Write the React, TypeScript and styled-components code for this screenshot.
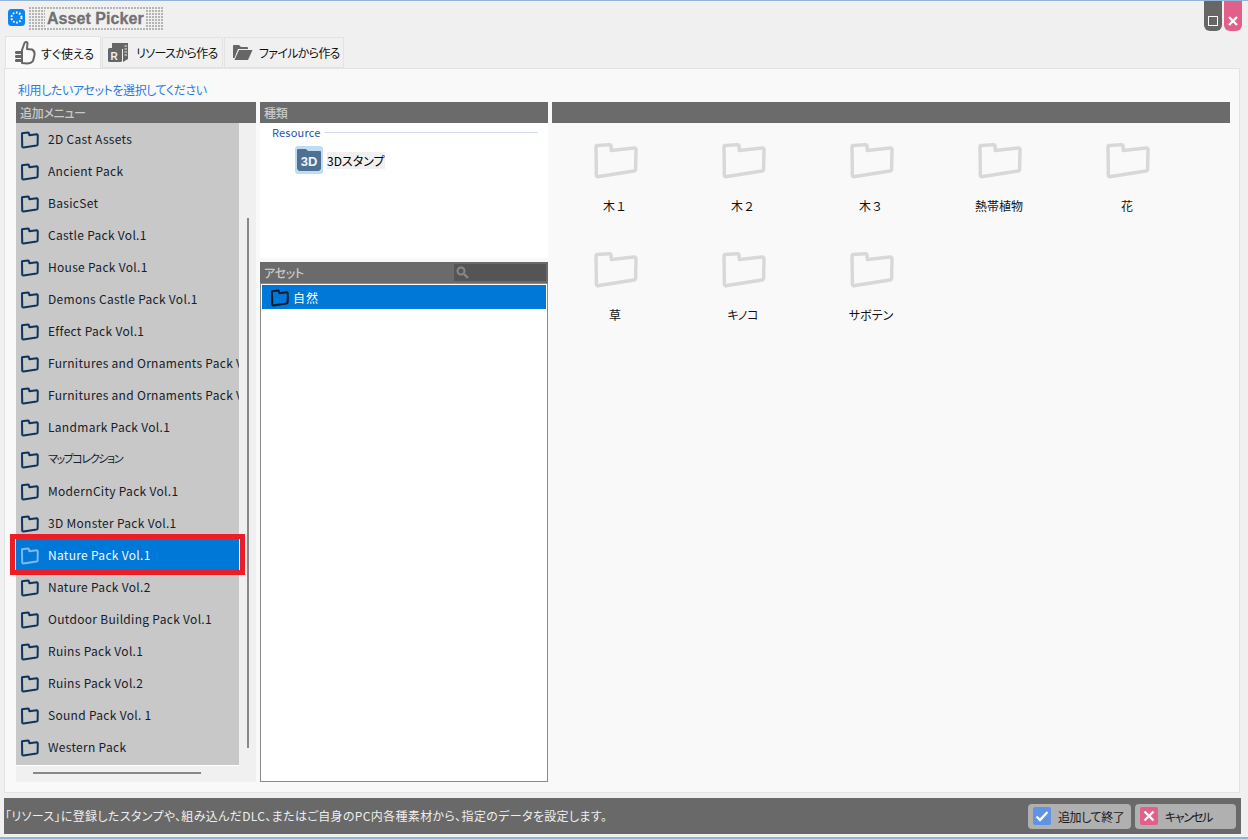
import React from "react";
import styled, { createGlobalStyle } from "styled-components";

const Global = createGlobalStyle`
  html, body { margin: 0; padding: 0; background: #f0f0f0; }
  body { font-family: "Noto Sans CJK JP", "Noto Sans", sans-serif; font-size: 12px; font-feature-settings: "palt"; color: #111; }
  * { box-sizing: border-box; }
`;

const Window = styled.div`
  width: 1248px; height: 839px; display: flex; flex-direction: column;
  background: #f0f0f0; border-top: 1px solid #94b4d6; border-bottom: 2px solid #94b4d6; overflow: hidden;
`;
const TitleBar = styled.div`
  height: 34px; flex: none; display: flex; align-items: flex-start; padding-left: 8px;
`;
const AppIcon = styled.svg`
  width: 17px; height: 17px; margin-top: 8px; flex: none;
`;
const TitleBlock = styled.div`
  margin: 6px 0 0 4px; width: 135px; height: 24px; padding: 3px 0 0 16px;
  background-image: radial-gradient(circle at 1px 1px, #b4b4b4 1px, transparent 1.1px);
  background-size: 3px 3px;
`;
const TitleText = styled.span`
  display: inline-block; height: 18px; padding: 0 2px; background: #f0f0f0;
  font-family: "Liberation Sans", sans-serif; font-weight: 700; font-size: 16px; line-height: 18px;
  letter-spacing: 0.05px; color: #717171; -webkit-text-stroke: 0.3px #717171; font-feature-settings: normal;
`;
const WinButtons = styled.div`
  margin-left: auto; margin-right: 6px; display: flex; gap: 2px; margin-top: -1px;
`;
const WinButton = styled.div<{ $bg: string }>`
  width: 18px; height: 31px; background: ${(p) => p.$bg}; border-radius: 0 0 6px 6px;
  display: flex; align-items: flex-end; justify-content: center; padding-bottom: 5px;
`;
const TabRow = styled.div`
  height: 33px; flex: none; display: flex; align-items: flex-end; padding-left: 5px; gap: 1px;
`;
const Tab = styled.div<{ $active?: boolean; $w: number; $pad: number; $gap: number; $ls: number }>`
  width: ${(p) => p.$w}px; height: ${(p) => (p.$active ? 33 : 31)}px; display: flex; align-items: center; gap: ${(p) => p.$gap}px;
  padding-left: ${(p) => p.$pad}px; white-space: nowrap;
  background: ${(p) => (p.$active ? "#f9f9f9" : "#f0f0f0")};
  border: 1px solid #e3e3e3; border-bottom: ${(p) => (p.$active ? "none" : "1px solid #e3e3e3")};
  color: #111; font-size: 12px; letter-spacing: ${(p) => p.$ls}px; margin-bottom: ${(p) => (p.$active ? -1 : 0)}px;
`;
const TabBody = styled.div`
  width: 1236px; height: 725px; margin-left: 4px; flex: none; background: #f9f9f9; border: 1px solid #e3e3e3;
  padding: 11px 9px 10px 11px; display: flex; flex-direction: column;
`;
const Hint = styled.div`
  height: 22px; padding-left: 2px; color: #2a7be4; font-size: 12px; line-height: 19px; letter-spacing: -0.4px;
`;
const Columns = styled.div`
  display: flex; gap: 4px; height: 680px;
`;
const SectionHeader = styled.div`
  height: 21px; flex: none; background: #6b6b6b; color: #c9c9c9; font-size: 12px; font-weight: 500; line-height: 20px; padding-left: 4px;
  letter-spacing: -0.3px; display: flex; justify-content: space-between; align-items: center;
`;
const LeftCol = styled.div`
  width: 240px; flex: none; display: flex; flex-direction: column; background: #f0f0f0;
`;
const ListArea = styled.div`
  display: flex; height: 642px; flex: none;
`;
const PackList = styled.div`
  width: 223px; background: #c8c8c8; flex: none; border-bottom: 1px solid #fff; height: 643px;
`;
const PackRow = styled.div<{ $selected?: boolean }>`
  height: 32px; display: flex; align-items: center; gap: 9px; padding-left: 4px; position: relative; white-space: nowrap;
  background: ${(p) => (p.$selected ? "#0078d7" : "transparent")};
  color: ${(p) => (p.$selected ? "#f2f8ff" : "#14202c")};
`;
const PackLabel = styled.span<{ $kana?: boolean }>`
  display: block; width: 191px; overflow: hidden; margin-top: -2px;
  font-size: ${(p) => (p.$kana ? 11 : 12)}px;
  letter-spacing: ${(p) => (p.$kana ? -1.4 : 0.3)}px;
`;
const RedBox = styled.div`
  position: absolute; left: -6px; top: -5px; width: 235px; height: 41px; border: 5px solid #ee1c25; pointer-events: none;
`;
const VTrack = styled.div`
  flex: 1; position: relative;
`;
const VThumb = styled.div`
  position: absolute; left: 8px; top: 95px; width: 2px; height: 530px; background: #888;
`;
const HTrack = styled.div`
  height: 17px; flex: none; padding: 7px 0 0 17px;
`;
const HThumb = styled.div`
  width: 168px; height: 2px; background: #888;
`;
const MidCol = styled.div`
  width: 288px; flex: none; display: flex; flex-direction: column;
`;
const KindPanel = styled.div`
  height: 135px; flex: none; background: #fff; padding: 1px 10px 0 12px;
`;
const GroupHead = styled.div`
  display: flex; align-items: center; gap: 4px; color: #1d52ad; font-size: 11px; height: 16px; letter-spacing: 0.2px;
`;
const GroupLine = styled.div`
  flex: 1; height: 1px; background: #d3dcf0;
`;
const KindRow = styled.div`
  display: flex; align-items: center; gap: 4px; margin: 6px 0 0 23px;
`;
const KindName = styled.span`
  background: #f0f0f0; color: #000; font-size: 12px; line-height: 17px; height: 17px;
`;
const AssetHeader = styled(SectionHeader)`
  margin-top: 4px; padding-right: 2px;
`;
const SearchBox = styled.div`
  width: 92px; height: 17px; background: #555; display: flex; align-items: center; padding-left: 2px;
`;
const AssetList = styled.div`
  flex: 1; background: #fff; border: 1px solid #8a8a8a; padding: 1px;
`;
const AssetRow = styled.div`
  height: 24px; background: #0078d7; color: #fff; display: flex; align-items: center; gap: 4px; padding-left: 8px; font-size: 12px; letter-spacing: 1px;
`;
const RightCol = styled.div`
  flex: 1; display: flex; flex-direction: column;
`;
const FolderGrid = styled.div`
  display: grid; grid-template-columns: repeat(5, 128px); grid-auto-rows: 109px; padding-top: 20px; margin-left: -1px;
`;
const FolderCell = styled.div`
  display: flex; flex-direction: column; align-items: center; color: #111; font-size: 12px;
`;
const FolderName = styled.div<{ $kana: boolean }>`
  margin-top: 17px; line-height: 20px; height: 20px;
  font-feature-settings: ${(p) => (p.$kana ? '"palt"' : "normal")};
`;
const Footer = styled.div`
  width: 1237px; height: 36px; margin: 5px 0 0 4px; flex: none; background: #696969; color: #eee; font-size: 12px;
  display: flex; align-items: center; padding: 0 5px 0 1px;
`;
const FooterText = styled.div`
  flex: 1; letter-spacing: 0.35px; margin-top: -2px;
`;
const FootButton = styled.div<{ $w: number; $ls: number; $gap: number }>`
  width: ${(p) => p.$w}px; height: 25px; background: #b0b0b0; border-radius: 4px; display: flex; align-items: center;
  padding-left: 5px; gap: ${(p) => p.$gap}px; color: #1a1a1a; margin-left: 4px; font-size: 12px; letter-spacing: ${(p) => p.$ls}px;
`;
const Badge = styled.div<{ $bg: string }>`
  width: 18px; height: 18px; border-radius: 2px; background: ${(p) => p.$bg}; display: flex; align-items: center; justify-content: center; flex: none;
`;

const Folder = ({ color = "#0d3560" }: { color?: string }) => (
  <svg width="19" height="19" viewBox="0 0 19 19" fill="none" style={{ flex: "none", marginTop: 1 }}>
    <path d="M2 3.2 L8 2.5 Q9.2 2.6 9.3 5.2 L16.6 4.2 Q17.8 4.2 17.8 5.4 L17.6 14.4 Q17.6 15.2 16.6 15.4 L3.4 17.4 Q2.2 17.4 2.2 16.2 Z"
      stroke={color} strokeWidth="2" strokeLinejoin="round" />
  </svg>
);

const ThumbIcon = () => (
  <svg width="22" height="26" viewBox="0 0 22 26" fill="none" style={{ flex: "none" }}>
    <path d="M8 10 L10.5 3 Q12 1 13.5 3 L13 9 L18 9.5 Q21 11 20.5 15 L19 21 Q17 23.5 13 23.5 L8 23 Z" stroke="#666" strokeWidth="2" strokeLinejoin="round" />
    <rect x="1" y="11" width="7" height="3" rx="1.2" fill="#666" />
    <rect x="1" y="15" width="7" height="3" rx="1.2" fill="#666" />
    <rect x="1" y="19" width="7" height="3" rx="1.2" fill="#666" />
  </svg>
);
const ResIcon = () => (
  <svg width="22" height="21" viewBox="0 0 22 21" style={{ flex: "none" }}>
    <path d="M5 1 H21 V17 L16 20 V1 H5Z" fill="#666" />
    <rect x="5" y="1" width="12" height="6" fill="#666" />
    <rect x="1" y="6" width="14" height="14" rx="1.5" fill="#666" />
    <text x="3.5" y="18" fontFamily="Liberation Sans" fontWeight="700" fontSize="10" fill="#f0f0f0">R</text>
    <path d="M17.5 4 H20 M17.5 7 H20 M17.5 10 H20 M17.5 13 H20" stroke="#f0f0f0" strokeWidth="1" />
  </svg>
);
const OpenIcon = () => (
  <svg width="21" height="17" viewBox="0 0 21 17" style={{ flex: "none" }}>
    <path d="M1 2 Q1 1 2 1 H7 L9 3 H15 Q16 3 16 4 V5 H6 L2.5 14 H1Z" fill="#666" />
    <path d="M7 6 H20.5 L16 16 H2.5 Z" fill="#666" />
  </svg>
);
const Stamp3D = () => (
  <svg width="28" height="28" viewBox="0 0 28 28" style={{ flex: "none" }}>
    <rect width="28" height="28" rx="3" fill="#bedcf5" />
    <path d="M2 4 Q2 3 3 3 H11 L13 5 H25 Q26 5 26 6 V23 L24 25 H4 L2 23 Z" fill="#4f7091" />
    <text x="14" y="20" textAnchor="middle" fontFamily="Liberation Sans" fontWeight="700" fontSize="13" fill="#eef4fa">3D</text>
  </svg>
);

const packs = [
  "2D Cast Assets", "Ancient Pack", "BasicSet", "Castle Pack Vol.1", "House Pack Vol.1", "Demons Castle Pack Vol.1",
  "Effect Pack Vol.1", "Furnitures and Ornaments Pack Vol.1", "Furnitures and Ornaments Pack Vol.2", "Landmark Pack Vol.1",
  "マップコレクション", "ModernCity Pack Vol.1", "3D Monster Pack Vol.1", "Nature Pack Vol.1", "Nature Pack Vol.2",
  "Outdoor Building Pack Vol.1", "Ruins Pack Vol.1", "Ruins Pack Vol.2", "Sound Pack Vol. 1", "Western Pack",
];
const folders = ["木１", "木２", "木３", "熱帯植物", "花", "草", "キノコ", "サボテン"];
const hasKana = (s: string) => /[ァ-ヶ]/.test(s);

export default function App() {
  return (
    <Window>
      <Global />
      <TitleBar>
        <AppIcon viewBox="0 0 17 17">
          <rect width="17" height="17" rx="3.5" fill="#0d84ee" />
          <circle cx="8.5" cy="8.5" r="5" fill="none" stroke="#fff" strokeWidth="2" strokeDasharray="1.6 1.6" />
        </AppIcon>
        <TitleBlock><TitleText>Asset Picker</TitleText></TitleBlock>
        <WinButtons>
          <WinButton $bg="#666">
            <svg width="10" height="10" viewBox="0 0 10 10"><rect x=".5" y=".5" width="9" height="9" fill="none" stroke="#fff" /></svg>
          </WinButton>
          <WinButton $bg="#e0608a">
            <svg width="10" height="10" viewBox="0 0 10 10"><path d="M1 1 L9 9 M9 1 L1 9" stroke="#fff" strokeWidth="2.4" /></svg>
          </WinButton>
        </WinButtons>
      </TitleBar>
      <TabRow>
        <Tab $active $w={96} $pad={8} $gap={5} $ls={0}><ThumbIcon />すぐ使える</Tab>
        <Tab $w={121} $pad={4} $gap={7} $ls={-0.6}><ResIcon />リソースから作る</Tab>
        <Tab $w={120} $pad={7} $gap={6} $ls={-0.7}><OpenIcon />ファイルから作る</Tab>
      </TabRow>
      <TabBody>
        <Hint>利用したいアセットを選択してください</Hint>
        <Columns>
          <LeftCol>
            <SectionHeader>追加メニュー</SectionHeader>
            <ListArea>
              <PackList>
                {packs.map((name) => {
                  const selected = name === "Nature Pack Vol.1";
                  return (
                    <PackRow key={name} $selected={selected}>
                      <Folder color={selected ? "#7db9ee" : "#0d3560"} />
                      <PackLabel $kana={hasKana(name)}>{name}</PackLabel>
                      {selected && <RedBox />}
                    </PackRow>
                  );
                })}
              </PackList>
              <VTrack><VThumb /></VTrack>
            </ListArea>
            <HTrack><HThumb /></HTrack>
          </LeftCol>
          <MidCol>
            <SectionHeader>種類</SectionHeader>
            <KindPanel>
              <GroupHead>Resource<GroupLine /></GroupHead>
              <KindRow><Stamp3D /><KindName>3Dスタンプ</KindName></KindRow>
            </KindPanel>
            <AssetHeader>
              アセット
              <SearchBox>
                <svg width="13" height="13" viewBox="0 0 13 13" fill="none">
                  <circle cx="5" cy="5" r="3.5" stroke="#888" strokeWidth="2" />
                  <path d="M8 8 L12 12" stroke="#888" strokeWidth="2.4" />
                </svg>
              </SearchBox>
            </AssetHeader>
            <AssetList>
              <AssetRow><Folder color="#0c1a2a" />自然</AssetRow>
            </AssetList>
          </MidCol>
          <RightCol>
            <SectionHeader />
            <FolderGrid>
              {folders.map((name) => (
                <FolderCell key={name}>
                  <svg width="46" height="36" viewBox="0 0 46 36" fill="none">
                    <path d="M4 4 Q4 2.6 5.5 2.4 L17 1.8 Q19 1.8 19 3.5 L19.4 7.6 L42 5 Q44 5 44 6.8 L43.6 26 Q43.6 27.8 42 28 L7 33.6 Q4.4 34 4.4 32 Z" stroke="#d8d8d8" strokeWidth="3.5" strokeLinejoin="round" />
                  </svg>
                  <FolderName $kana={hasKana(name)}>{name}</FolderName>
                </FolderCell>
              ))}
            </FolderGrid>
          </RightCol>
        </Columns>
      </TabBody>
      <Footer>
        <FooterText>「リソース」に登録したスタンプや、組み込んだDLC、またはご自身のPC内各種素材から、指定のデータを設定します。</FooterText>
        <FootButton $w={103} $ls={-0.4} $gap={7}>
          <Badge $bg="#6092e6">
            <svg width="14" height="12" viewBox="0 0 14 12" fill="none"><path d="M1.5 6.5 L5 10 L12.5 2" stroke="#fff" strokeWidth="2.4" /></svg>
          </Badge>
          追加して終了
        </FootButton>
        <FootButton $w={101} $ls={-1.5} $gap={7}>
          <Badge $bg="#e0608a">
            <svg width="12" height="12" viewBox="0 0 12 12"><path d="M1.5 1.5 L10.5 10.5 M10.5 1.5 L1.5 10.5" stroke="#fff" strokeWidth="2.4" /></svg>
          </Badge>
          キャンセル
        </FootButton>
      </Footer>
    </Window>
  );
}
